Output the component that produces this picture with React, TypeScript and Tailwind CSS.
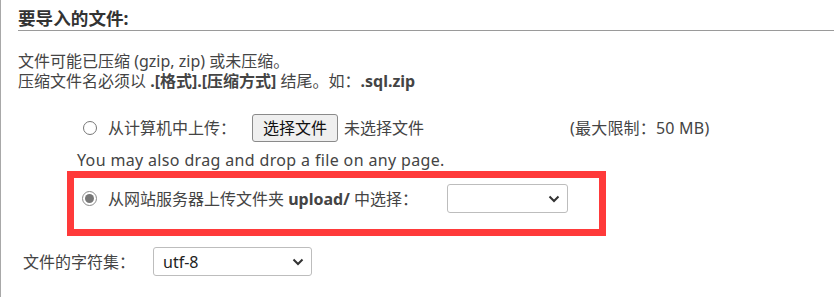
const font = {
  fontFamily: '"Segoe UI", "Noto Sans", "Noto Sans CJK SC", sans-serif',
};

const Radio: React.FC<{ checked?: boolean }> = ({ checked }) =>
  checked ? (
    <span className="flex h-[15px] w-[15px] shrink-0 items-center justify-center rounded-full border-[1.5px] border-[#8a8a8a] bg-white">
      <span className="h-[9px] w-[9px] rounded-full bg-[#777]" />
    </span>
  ) : (
    <span className="h-[14px] w-[14px] shrink-0 rounded-full border border-[#777] bg-white" />
  );

const Chevron = () => (
  <svg width="12" height="8" viewBox="0 0 12 8" className="shrink-0">
    <path
      d="M1.5 1.5l4.5 4.5 4.5-4.5"
      fill="none"
      stroke="#333"
      strokeWidth="2"
    />
  </svg>
);

const FakeSelect: React.FC<{ value?: string; className?: string }> = ({
  value,
  className,
}) => (
  <div
    className={`flex h-[29px] items-center justify-between rounded-[3px] border border-[#bdbdbd] bg-white pl-[9px] pr-[7px] text-[16px] text-[#222] ${className}`}
  >
    <span>{value}</span>
    <Chevron />
  </div>
);

export default function App() {
  return (
    <div
      className="h-[297px] w-[834px] overflow-hidden border-l border-[#a8a8a8] bg-white pl-[17px] text-[16px] text-[#444]"
      style={font}
    >
      <h2 className="mt-[7px] border-b border-[#9a9a9a] text-[17.6px] font-bold leading-[23px] text-[#333]">
        要导入的文件:
      </h2>

      <p className="mt-[20px] leading-[20px]">
        文件可能已压缩 (gzip, zip) 或未压缩。
        <br />
        压缩文件名必须以 <b>.[格式].[压缩方式]</b> 结尾。如：<b>.sql.zip</b>
      </p>

      {/* upload from computer */}
      <div className="mt-[23px] flex h-[28px] items-center pl-[65px]">
        <Radio />
        <span className="ml-[11px] w-[144px]">从计算机中上传：</span>
        <span className="flex h-[28px] w-[86px] items-center justify-center rounded-[3px] border border-[#8a8a8a] bg-[#efefef] text-[#111]">
          选择文件
        </span>
        <span className="ml-[6px] w-[226px]">未选择文件</span>
        <span className="tracking-[0.2px]">(最大限制：50 MB)</span>
      </div>

      <div className="mt-[8px] pl-[59px] leading-[20px] tracking-[0.35px]">
        You may also drag and drop a file on any page.
      </div>

      {/* upload dir */}
      <div className="ml-[49px] mt-[1px] flex h-[65px] w-[539px] items-start border-[7px] border-[#ff3a3a] pl-[8px] pt-[6px]">
        <div className="flex h-[29px] items-center">
          <Radio checked />
          <span className="ml-[11px] w-[339px]">
            从网站服务器上传文件夹 <b>upload/</b> 中选择：
          </span>
          <FakeSelect className="w-[121px]" />
        </div>
      </div>

      <div className="mt-[11px] flex items-center pl-[5px]">
        <span className="w-[130px]">文件的字符集：</span>
        <FakeSelect value="utf-8" className="w-[159px]" />
      </div>
    </div>
  );
}
